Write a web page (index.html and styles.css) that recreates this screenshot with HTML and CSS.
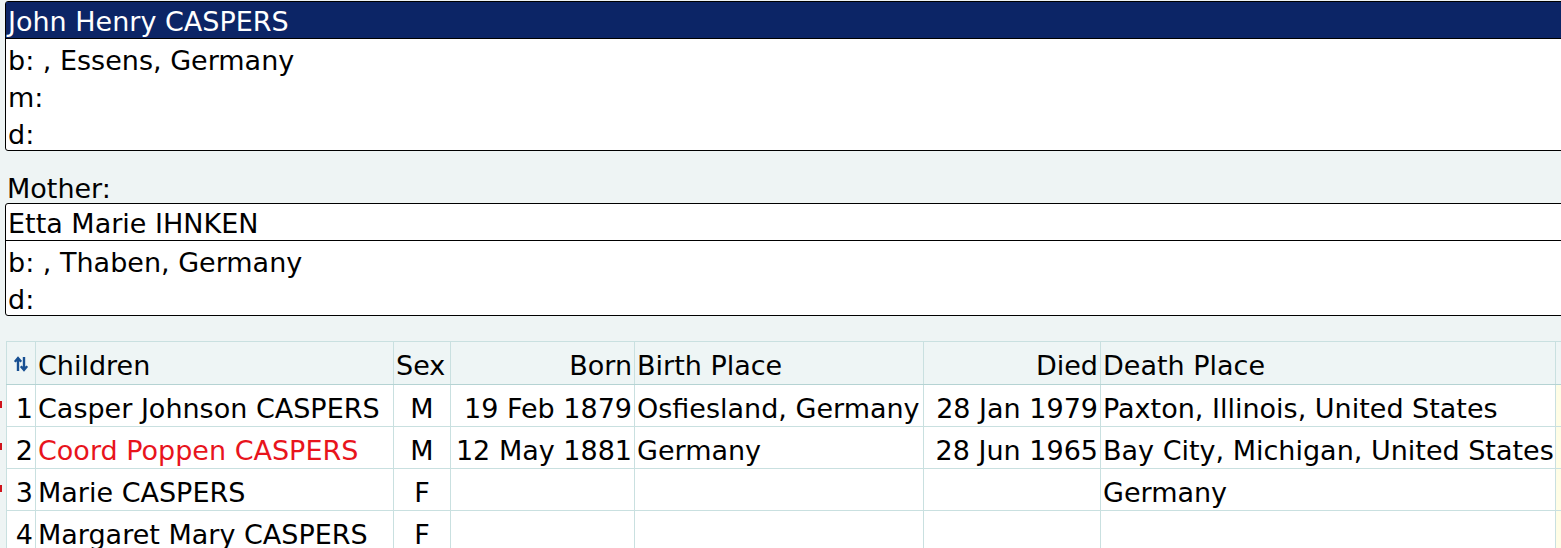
FILE: index.html
```html
<!DOCTYPE html>
<html lang="en">
<head>
    <meta charset="UTF-8">
    <title>Family - John Henry CASPERS</title>
    <link rel="stylesheet" href="styles.css">
</head>
<body>
    <div class="family">
        <div class="person-box">
            <div class="person-name selected">John Henry CASPERS</div>
            <div class="person-facts">
                <div class="fact">b: , Essens, Germany</div>
                <div class="fact">m:</div>
                <div class="fact">d:</div>
            </div>
        </div>

        <div class="role-label">Mother:</div>
        <div class="person-box">
            <div class="person-name">Etta Marie IHNKEN</div>
            <div class="person-facts">
                <div class="fact">b: , Thaben, Germany</div>
                <div class="fact">d:</div>
            </div>
        </div>

        <table class="children">
            <colgroup>
                <col class="col-num">
                <col class="col-name">
                <col class="col-sex">
                <col class="col-born">
                <col class="col-bplace">
                <col class="col-died">
                <col class="col-dplace">
                <col class="col-extra">
            </colgroup>
            <thead>
                <tr>
                    <th class="sort">
                        <svg class="sort-icon" width="14" height="16" viewBox="0 0 14 16">
                            <path d="M4 15V2.5M0.8 5.8L4 2 7.2 5.8M10 1v12.5M6.8 10.2L10 14 13.2 10.2" fill="none" stroke="#174f92" stroke-width="2.4"/>
                        </svg>
                    </th>
                    <th>Children</th>
                    <th>Sex</th>
                    <th class="right">Born</th>
                    <th>Birth Place</th>
                    <th class="right">Died</th>
                    <th>Death Place</th>
                    <th></th>
                </tr>
            </thead>
            <tbody>
                <tr>
                    <td class="num flagged">1</td>
                    <td>Casper Johnson CASPERS</td>
                    <td class="center">M</td>
                    <td class="right">19 Feb 1879</td>
                    <td>Osfiesland, Germany</td>
                    <td class="right">28 Jan 1979</td>
                    <td>Paxton, Illinois, United States</td>
                    <td class="extra"></td>
                </tr>
                <tr>
                    <td class="num flagged">2</td>
                    <td class="no-parents">Coord Poppen CASPERS</td>
                    <td class="center">M</td>
                    <td class="right">12 May 1881</td>
                    <td>Germany</td>
                    <td class="right">28 Jun 1965</td>
                    <td>Bay City, Michigan, United States</td>
                    <td class="extra"></td>
                </tr>
                <tr>
                    <td class="num flagged">3</td>
                    <td>Marie CASPERS</td>
                    <td class="center">F</td>
                    <td class="right"></td>
                    <td></td>
                    <td class="right"></td>
                    <td>Germany</td>
                    <td class="extra"></td>
                </tr>
                <tr>
                    <td class="num">4</td>
                    <td>Margaret Mary CASPERS</td>
                    <td class="center">F</td>
                    <td class="right"></td>
                    <td></td>
                    <td class="right"></td>
                    <td></td>
                    <td class="extra"></td>
                </tr>
            </tbody>
        </table>
    </div>
</body>
</html>
```

FILE: styles.css
```css
:root {
    --bg-color: #eef4f4;
    --selected-bg: #0c2566;
    --grid-color: #c9e0e0;
    --header-bg: #eef5f5;
}

* {
    margin: 0;
    padding: 0;
    box-sizing: border-box;
}

body {
    background-color: var(--bg-color);
    color: #000;
    font-family: "DejaVu Sans", Tahoma, sans-serif;
    font-size: 27px;
    overflow: hidden;
}

.family {
    display: flex;
    flex-direction: column;
    padding: 1px 0 0 5px;
    width: 1580px;
}

.person-box {
    border: 1px solid #000;
    border-radius: 3px;
    background: #fff;
}

.person-name {
    height: 37px;
    line-height: 37px;
    padding: 1px 0 0 2px;
    border-bottom: 1px solid #000;
}

.person-name.selected {
    background: var(--selected-bg);
    color: #fff;
}

.fact {
    height: 37px;
    line-height: 37px;
    padding: 3px 0 0 2px;
}

.role-label {
    height: 52px;
    line-height: 37px;
    padding: 19px 0 0 2px;
}

.children {
    margin-top: 25px;
    margin-left: 1px;
    border-collapse: collapse;
    table-layout: fixed;
    width: 1580px;
    background: #fff;
    border-top: 1px solid #000;
    border-left: 1px solid #333;
}

.col-num { width: 29px; }
.col-name { width: 358px; }
.col-sex { width: 57px; }
.col-born { width: 184px; }
.col-bplace { width: 289px; }
.col-died { width: 177px; }
.col-dplace { width: 455px; }
.col-extra { width: 31px; }

.children th,
.children td {
    height: 42px;
    padding: 5px 2px 0;
    font-weight: normal;
    text-align: left;
    white-space: nowrap;
    overflow: hidden;
    border: 1px solid var(--grid-color);
}

.children th {
    height: 43px;
    background: var(--header-bg);
    border-bottom-color: #b5d3d3;
}

.children .sort {
    padding: 2px 0 0;
    vertical-align: middle;
}

.sort-icon {
    display: block;
    margin: 0 auto;
}

.children .right { text-align: right; }
.children .center { text-align: center; }

.children .num {
    text-align: right;
    position: relative;
    overflow: visible;
}

/* small red tick on rows that carry a note */
.children .num.flagged::before {
    content: "";
    position: absolute;
    left: -8px;
    top: 16px;
    width: 3px;
    height: 7px;
    background: #d0141c;
}

.children .no-parents {
    color: #e8141c;
}

.children .extra {
    background: #fffde6;
}
```
